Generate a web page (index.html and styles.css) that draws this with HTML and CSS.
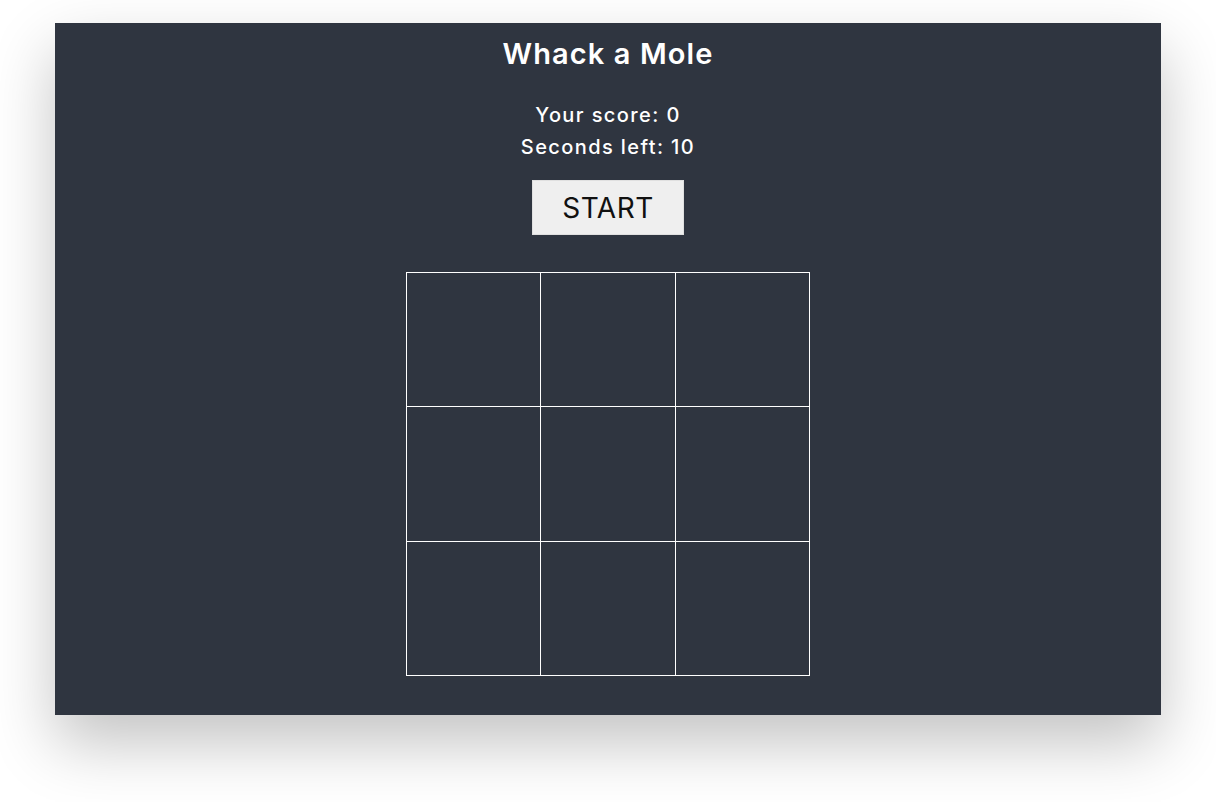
FILE: index.html
```html
<!DOCTYPE html>
<html>
<head>
<meta charset="utf-8">
<link rel="stylesheet" href="styles.css">
</head>
<body>
<main class="panel">
  <h1 class="title">Whack a Mole</h1>
  <p class="stat">Your score: <span>0</span></p>
  <p class="stat">Seconds left: <span>10</span></p>
  <button class="start">START</button>
  <div class="grid">
    <div class="hole"></div><div class="hole"></div><div class="hole"></div>
    <div class="hole"></div><div class="hole"></div><div class="hole"></div>
    <div class="hole"></div><div class="hole"></div><div class="hole"></div>
  </div>
</main>
</body>
</html>
```
FILE: styles.css
```css
html, body {
  margin: 0;
  padding: 0;
  background: #ffffff;
}
body {
  box-sizing: border-box;
  min-height: 802px;
  padding: 23px 55px 0;
  font-family: "Inter", "Lato", sans-serif;
}
.panel {
  width: 1106px;
  height: 692px;
  background: #2f3540;
  box-shadow: 0 28px 60px rgba(0, 0, 0, 0.24);
  display: flex;
  flex-direction: column;
  align-items: center;
  color: #ffffff;
}
.title {
  margin: 0;
  padding-top: 13px;
  font-size: 29px;
  line-height: 36px;
  font-weight: 600;
  letter-spacing: 1.1px;
}
.stat {
  margin: 0;
  font-size: 20px;
  line-height: 32px;
  font-weight: 500;
  letter-spacing: 1.4px;
}
.title + .stat {
  margin-top: 27px;
}
.start {
  margin-top: 17px;
  width: 152px;
  height: 55px;
  background: #efefef;
  border: 1px solid #e0e0e0;
  color: #111111;
  font-family: "Inter", "Lato", sans-serif;
  font-size: 28px;
  font-weight: 400;
  letter-spacing: 0.5px;
  padding: 0;
}
.grid {
  margin-top: 37px;
  width: 402px;
  height: 402px;
  display: grid;
  grid-template-columns: repeat(3, 1fr);
  grid-template-rows: repeat(3, 1fr);
  gap: 1px;
  background: #ffffff;
  border: 1px solid #ffffff;
}
.hole {
  background: #2f3540;
}
```
